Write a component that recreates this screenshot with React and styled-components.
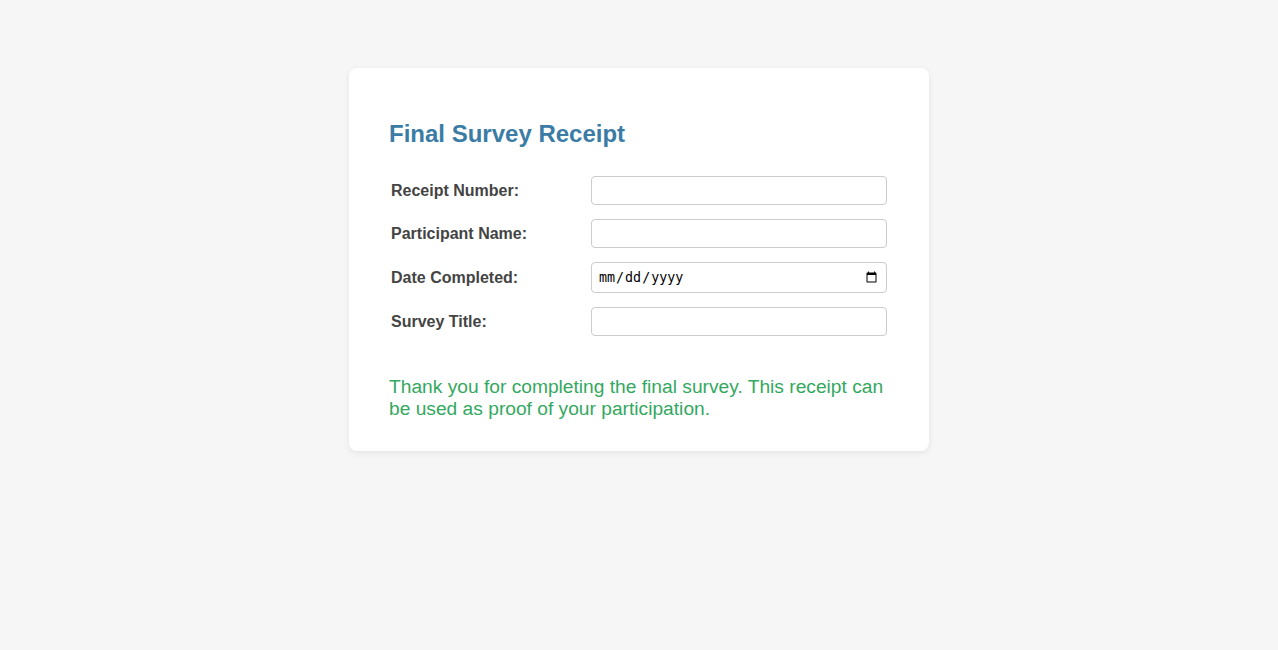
import React from "react";
import styled, { createGlobalStyle } from "styled-components";

const GlobalStyle = createGlobalStyle`
  body {
    margin: 0;
    padding: 8px;
    background: #f6f6f6;
    font-family: "Liberation Sans", Arial, sans-serif;
  }
`;

const Card = styled.div`
  width: 500px;
  margin: 60px auto 0;
  padding: 40px 40px 31px;
  background: #fff;
  border-radius: 8px;
  box-shadow: 0 2px 6px rgba(0, 0, 0, 0.08);
`;

const Title = styled.h2`
  margin: 12px 0 28px;
  font-size: 24px;
  font-weight: bold;
  color: #3a7ca5;
`;

const Form = styled.div`
  display: grid;
  grid-template-columns: 198px 1fr;
  column-gap: 2px;
  row-gap: 14px;
  padding: 0 2px;
  align-items: center;
`;

const Label = styled.label`
  font-size: 16px;
  font-weight: bold;
  color: #444;
`;

const Input = styled.input`
  box-sizing: border-box;
  width: 100%;
  height: ${(p) => (p.type === "date" ? "31px" : "29px")};
  padding: 6px;
  border: 1px solid #ccc;
  border-radius: 4px;
  font-size: 13.33px;
  background: #fff;
`;

const Message = styled.p`
  margin: 40px 0 0;
  font-size: 19.2px;
  line-height: 22px;
  color: #33a860;
`;

const fields = [
  { label: "Receipt Number:", type: "text" },
  { label: "Participant Name:", type: "text" },
  { label: "Date Completed:", type: "date" },
  { label: "Survey Title:", type: "text" },
];

export default function App() {
  return (
    <>
      <GlobalStyle />
      <Card>
        <Title>Final Survey Receipt</Title>
        <Form>
          {fields.map((f, i) => (
            <React.Fragment key={`field-${i}`}>
              <Label>{f.label}</Label>
              <Input type={f.type} />
            </React.Fragment>
          ))}
        </Form>
        <Message>
          Thank you for completing the final survey. This receipt can be used
          as proof of your participation.
        </Message>
      </Card>
    </>
  );
}
